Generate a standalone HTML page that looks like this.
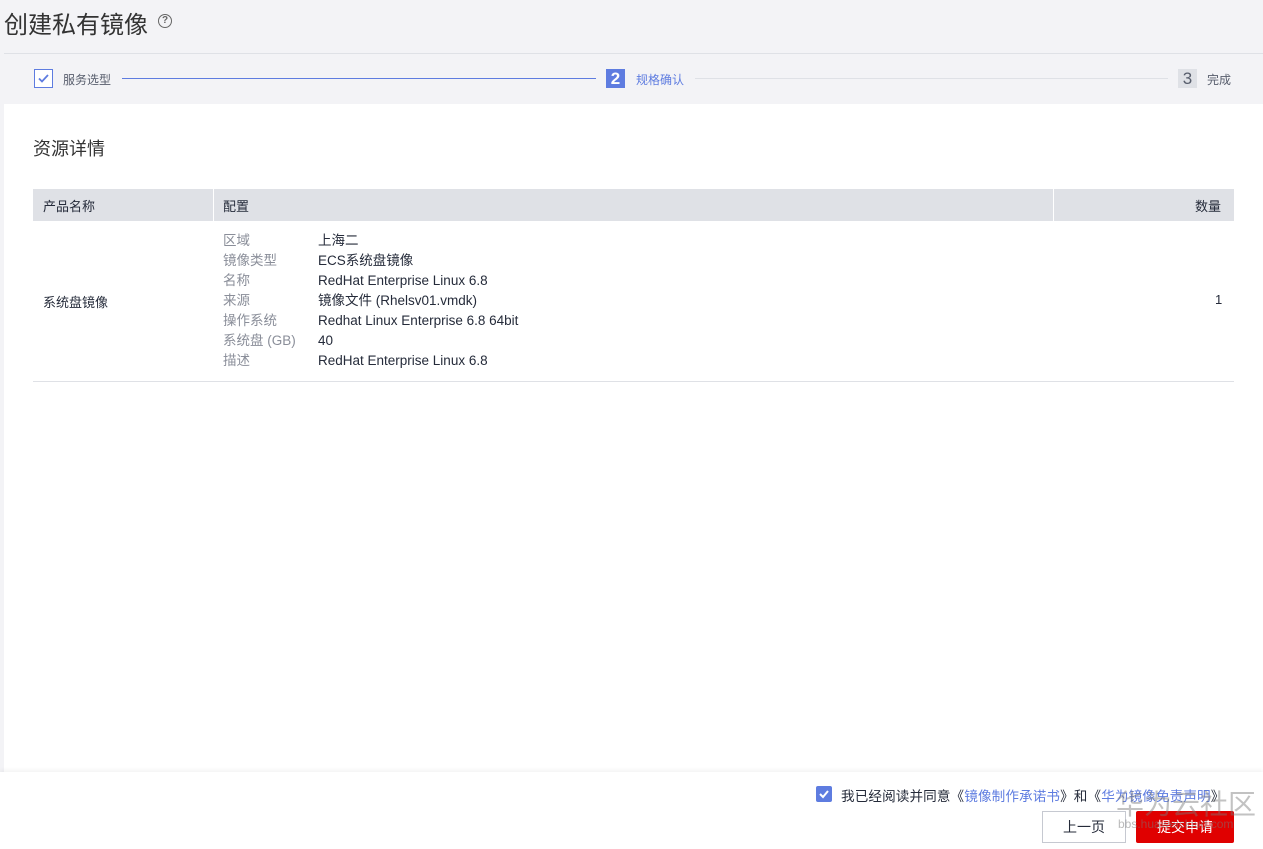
<!DOCTYPE html><html><head><meta charset="utf-8"><style>
body{margin:0;width:1263px;height:849px;background:#f3f3f6;font-family:"Liberation Sans","Noto Sans CJK SC",sans-serif;position:relative;overflow:hidden;color:#252b3a}
.a{position:absolute}
.t{font-size:13px;white-space:nowrap}
</style></head><body>
<div class="a" style="left:4px;top:5px;font-size:24px;color:#333">创建私有镜像</div>
<div class="a" style="left:158px;top:14px;width:12px;height:12px;border:1.5px solid #666;border-radius:50%;font-size:10px;line-height:12px;text-align:center;color:#666;font-weight:bold">?</div>
<div class="a" style="left:4px;top:53px;width:1259px;height:1px;background:#dfe1e6"></div>
<div class="a" style="left:34px;top:69px;width:19px;height:19px;border:1px solid #5e7ce0;background:#fff;box-sizing:border-box"></div>
<svg class="a" style="left:36px;top:71px" width="15" height="15"><path d="M3 7.5l3 3 6-6.5" stroke="#5e7ce0" stroke-width="1.8" fill="none"/></svg>
<div class="a t" style="left:63px;top:71px;color:#575d6c;font-size:12px">服务选型</div>
<div class="a" style="left:122px;top:78px;width:474px;height:1px;background:#5e7ce0"></div>
<div class="a" style="left:606px;top:69px;width:19px;height:19px;background:#5e7ce0;color:#fff;font-size:17px;text-align:center;line-height:19px;font-weight:bold">2</div>
<div class="a t" style="left:636px;top:71px;color:#5e7ce0;font-size:12px">规格确认</div>
<div class="a" style="left:695px;top:78px;width:473px;height:1px;background:#dfe1e6"></div>
<div class="a" style="left:1178px;top:69px;width:19px;height:19px;background:#dfe1e6;color:#575d6c;font-size:17px;text-align:center;line-height:19px">3</div>
<div class="a t" style="left:1207px;top:71px;color:#575d6c;font-size:12px">完成</div>
<div class="a" style="left:4px;top:104px;width:1259px;height:668px;background:#fff"></div>
<div class="a" style="left:33px;top:135px;font-size:18px;color:#333">资源详情</div>
<div class="a" style="left:33px;top:189px;width:1201px;height:32px;background:#dfe1e6"></div>
<div class="a" style="left:213px;top:189px;width:1px;height:32px;background:#fff"></div>
<div class="a" style="left:1053px;top:189px;width:1px;height:32px;background:#fff"></div>
<div class="a t" style="left:43px;top:196px">产品名称</div>
<div class="a t" style="left:223px;top:196px">配置</div>
<div class="a t" style="left:1195px;top:196px">数量</div>
<div class="a t" style="left:43px;top:292px">系统盘镜像</div>
<div class="a t" style="left:1215px;top:292px">1</div>
<div class="a t" style="left:223px;top:231px;color:#8a8e99;line-height:20px;font-size:13.5px">区域<br>镜像类型<br>名称<br>来源<br>操作系统<br>系统盘 (GB)<br>描述</div>
<div class="a t" style="left:318px;top:231px;line-height:20px;font-size:13.5px">上海二<br>ECS系统盘镜像<br>RedHat Enterprise Linux 6.8<br>镜像文件 (Rhelsv01.vmdk)<br>Redhat Linux Enterprise 6.8 64bit<br>40<br>RedHat Enterprise Linux 6.8</div>
<div class="a" style="left:33px;top:381px;width:1201px;height:1px;background:#dfe1e6"></div>
<div class="a" style="left:0;top:772px;width:1263px;height:77px;background:#fff;box-shadow:0 -2px 4px rgba(0,0,0,.05)"></div>
<div class="a" style="left:816px;top:786px;width:16px;height:16px;background:#5e7ce0;border-radius:2px"></div>
<svg class="a" style="left:817px;top:787px" width="14" height="14"><path d="M3 7l3 3 5-6" stroke="#fff" stroke-width="2" fill="none"/></svg>
<div class="a t" style="left:841px;top:785px;font-size:13.6px;letter-spacing:0.1px">我已经阅读并同意《<span style="color:#5e7ce0">镜像制作承诺书</span>》和《<span style="color:#5e7ce0">华为镜像免责声明</span>》</div>
<div class="a" style="left:1042px;top:811px;width:84px;height:32px;border:1px solid #c6c9d1;box-sizing:border-box;font-size:14px;text-align:center;line-height:30px;background:#fff">上一页</div>
<div class="a" style="left:1136px;top:811px;width:98px;height:32px;background:#e00000;border-radius:2px;color:#fff;font-size:14px;text-align:center;line-height:32px">提交申请</div>
<div class="a" style="left:1116px;top:783px;font-size:28px;color:rgba(120,120,120,.45)">华为云社区</div>
<div class="a" style="left:1118px;top:817px;font-size:12px;color:rgba(120,120,120,.5)">bbs.huaweicloud.com</div>
</body></html>
